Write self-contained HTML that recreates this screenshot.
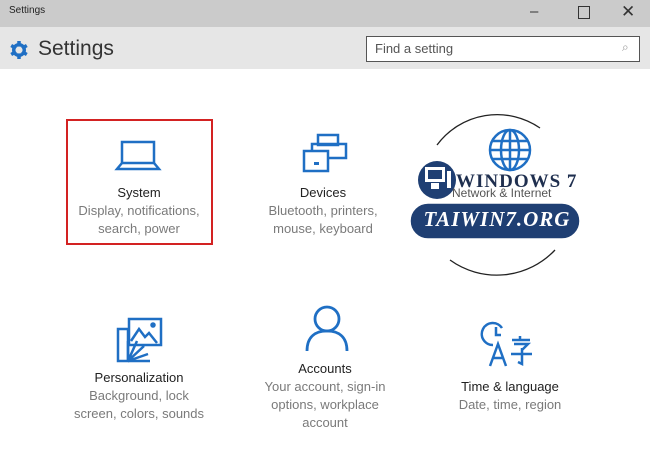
<!DOCTYPE html>
<html><head><meta charset="utf-8"><style>
body{margin:0;width:650px;height:466px;background:#fff;font-family:"Liberation Sans",sans-serif;position:relative;overflow:hidden}
.a{position:absolute}
.t{position:absolute;text-align:center;width:200px;font-size:13px;color:#222;line-height:18px}
.t span{color:#7a7a7a;display:block}
svg{position:absolute;overflow:visible}
</style></head><body>
<div class="a" style="left:0;top:0;width:650px;height:27px;background:#cbcbcb"></div>
<div class="a" style="left:9px;top:5px;font-size:10px;color:#222">Settings</div>
<div class="a" style="left:530px;top:3px;font-size:15px;color:#333">–</div>
<div class="a" style="left:578px;top:6px;width:10px;height:11px;border:1.5px solid #333"></div>
<div class="a" style="left:621px;top:2px;font-size:17px;color:#333">✕</div>
<div class="a" style="left:0;top:27px;width:650px;height:42px;background:#e6e6e6"></div>
<svg style="left:9px;top:40px" width="20" height="20" viewBox="0 0 20 20"><circle cx="10" cy="10" r="5.5" fill="none" stroke="#1f6fc4" stroke-width="3"/><g stroke="#1f6fc4" stroke-width="3.5"><line x1="10" y1="1" x2="10" y2="19"/><line x1="2.2" y1="5.5" x2="17.8" y2="14.5"/><line x1="2.2" y1="14.5" x2="17.8" y2="5.5"/></g><circle cx="10" cy="10" r="3.5" fill="#e6e6e6"/></svg>
<div class="a" style="left:38px;top:37px;font-size:21px;color:#333">Settings</div>
<div class="a" style="left:366px;top:36px;width:272px;height:24px;border:1.5px solid #555;background:#fff"></div>
<div class="a" style="left:375px;top:41px;font-size:13px;color:#555">Find a setting</div>
<div class="a" style="left:622px;top:40px;font-size:12px;color:#999">⌕</div>

<div class="a" style="left:66px;top:119px;width:143px;height:122px;border:2px solid #d32222"></div>
<svg style="left:116px;top:140px" width="46" height="32"><rect x="6" y="2" width="32" height="21" fill="none" stroke="#1f6fc4" stroke-width="2.5"/><path d="M6 23 L1 29 H43 L38 23" fill="none" stroke="#1f6fc4" stroke-width="2.5"/></svg>
<div class="t" style="left:39px;top:184px">System<span>Display, notifications,<br>search, power</span></div>

<svg style="left:302px;top:133px" width="46" height="42" fill="none" stroke="#1f6fc4" stroke-width="2.5"><rect x="16" y="2" width="20" height="10"/><rect x="10" y="11" width="34" height="14"/><rect x="2" y="18" width="24" height="20" fill="#fff"/><rect x="12" y="29" width="5" height="3" fill="#1f6fc4" stroke="none"/></svg>
<div class="t" style="left:223px;top:184px">Devices<span>Bluetooth, printers,<br>mouse, keyboard</span></div>

<svg style="left:115px;top:317px" width="48" height="46" fill="none" stroke="#1f6fc4" stroke-width="2.5"><rect x="14" y="2" width="32" height="26"/><path d="M16 24 L24 12 L30 20 L34 16 L42 26"/><circle cx="38" cy="8" r="1.5" fill="#1f6fc4"/><rect x="3" y="12" width="10" height="32" fill="#fff"/><path d="M13 44 L13 24 M13 44 L35 44 M13 44 L22 24 M13 44 L29 29 M13 44 L33 37"/></svg>
<div class="t" style="left:39px;top:369px">Personalization<span>Background, lock<br>screen, colors, sounds</span></div>

<svg style="left:304px;top:304px" width="46" height="48" fill="none" stroke="#1f6fc4" stroke-width="2.8"><circle cx="23" cy="15" r="12"/><path d="M3 47 C3 32 12 27 23 27 C34 27 43 32 43 47"/></svg>
<div class="t" style="left:225px;top:360px">Accounts<span>Your account, sign-in<br>options, workplace<br>account</span></div>

<svg style="left:484px;top:322px" width="52" height="46" fill="none" stroke="#1f6fc4" stroke-width="2.5"><path d="M18 6 A11 11 0 1 0 9 23"/><path d="M12 5 V13 H17"/><path d="M6 44 L14 22 L22 44 M9 36 H19"/><path d="M28 18 H46 M30 22 H44 L38 28 M38 26 V42 L34 40 M27 32 H48 M36 14 L36 18"/></svg>
<div class="t" style="left:410px;top:378px">Time &amp; language<span>Date, time, region</span></div>

<!-- watermark -->
<svg style="left:400px;top:110px" width="200" height="180">
<path d="M37 35 A75 75 0 0 1 140 18" fill="none" stroke="#222" stroke-width="1.3"/>
<path d="M50 150 A80 80 0 0 0 155 140" fill="none" stroke="#222" stroke-width="1.3"/>
<g fill="none" stroke="#1f6fc4" stroke-width="2.5"><circle cx="110" cy="40" r="20"/><ellipse cx="110" cy="40" rx="9" ry="20"/><line x1="90" y1="40" x2="130" y2="40"/><line x1="92" y1="31" x2="128" y2="31"/><line x1="92" y1="49" x2="128" y2="49"/><line x1="110" y1="20" x2="110" y2="60"/></g>
<circle cx="37" cy="70" r="19" fill="#1f3f73"/>
<rect x="25" y="57" width="20" height="15" fill="#fff"/><rect x="28" y="60" width="14" height="9" fill="#1f3f73"/><rect x="31" y="73" width="8" height="6" fill="#fff"/><rect x="47" y="61" width="4" height="17" fill="#fff"/>
<rect x="10" y="93" width="170" height="36" rx="18" fill="#1f3f73" stroke="#fff" stroke-width="1.5"/>
</svg>
<div class="a" style="left:456px;top:171px;font-family:'Liberation Serif',serif;font-weight:bold;font-size:19px;color:#1f2f4f;letter-spacing:1px">WINDOWS 7</div>
<div class="a" style="left:452px;top:186px;font-size:12px;color:#555">Network &amp; Internet</div>
<div class="a" style="left:414px;top:207px;width:166px;text-align:center;font-family:'Liberation Serif',serif;font-weight:bold;font-style:italic;font-size:21px;color:#fff;letter-spacing:1px">TAIWIN7.ORG</div>
</body></html>
